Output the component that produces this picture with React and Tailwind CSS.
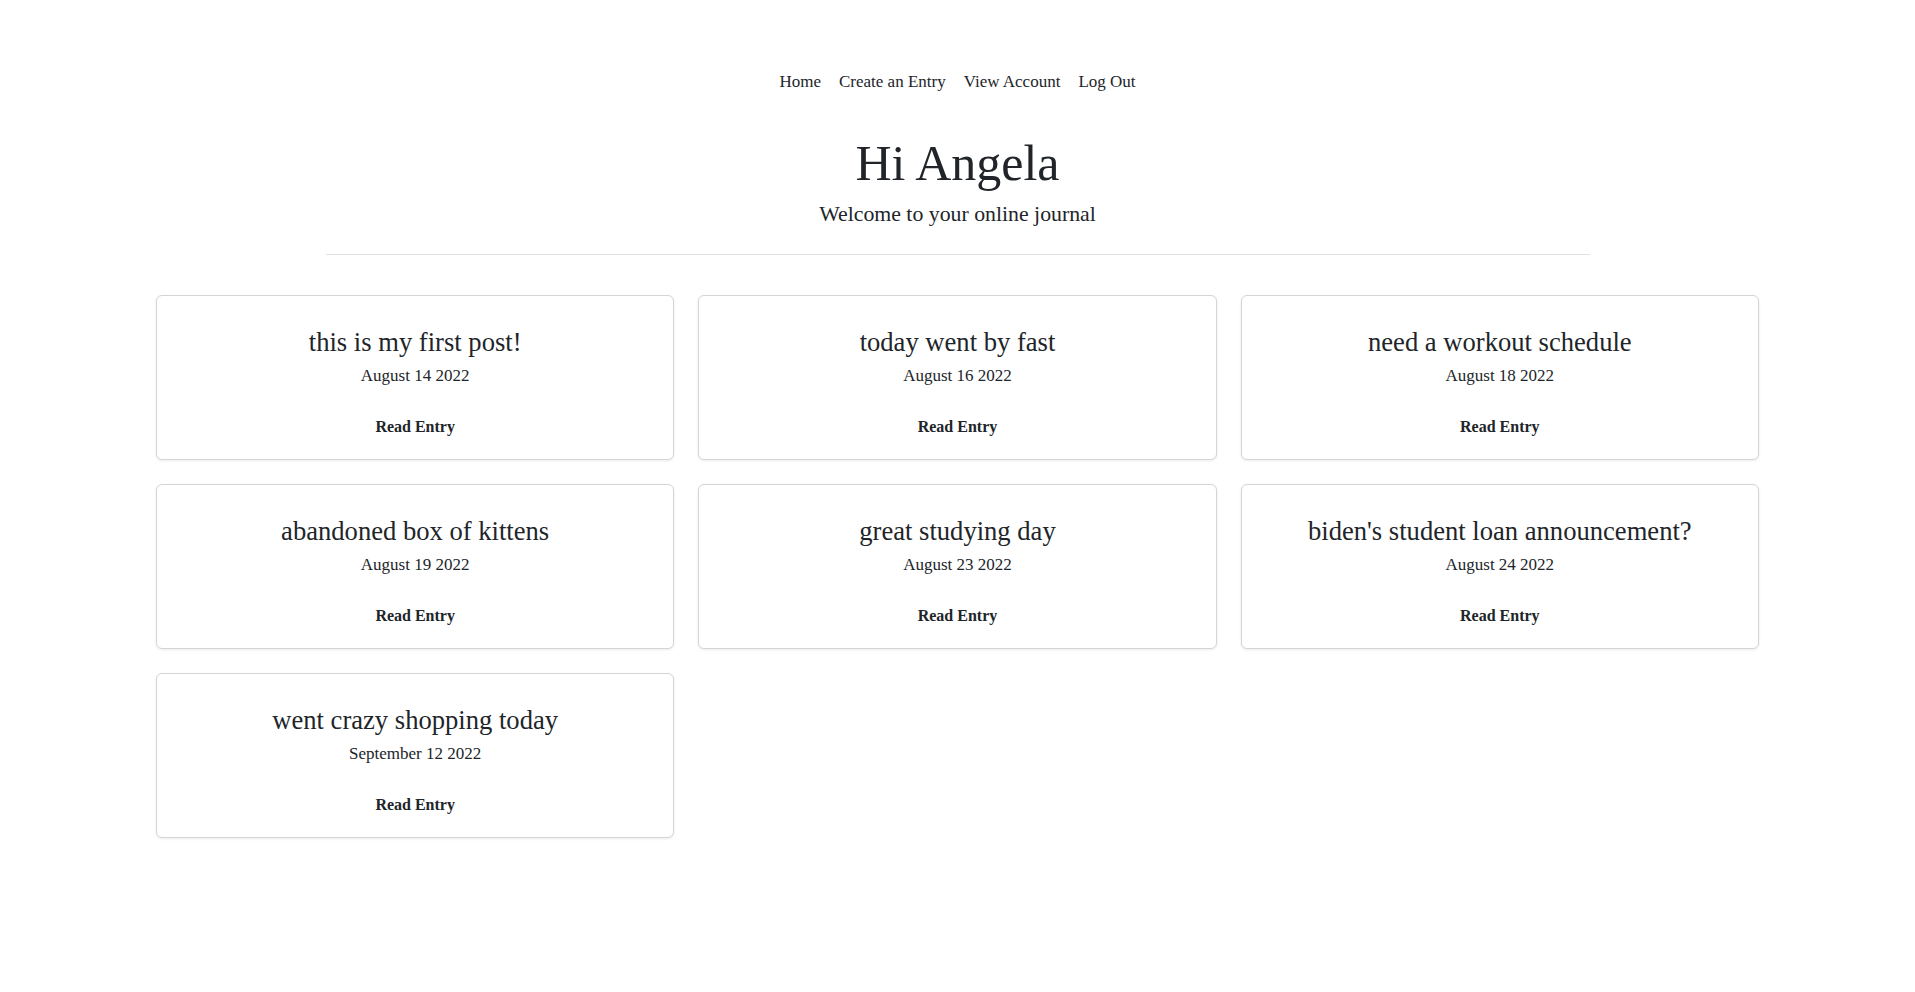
import React from "react";

const entries = [
  { id: 1, title: "this is my first post!", date: "August 14 2022" },
  { id: 2, title: "today went by fast", date: "August 16 2022" },
  { id: 3, title: "need a workout schedule", date: "August 18 2022" },
  { id: 4, title: "abandoned box of kittens", date: "August 19 2022" },
  { id: 5, title: "great studying day", date: "August 23 2022" },
  { id: 6, title: "biden's student loan announcement?", date: "August 24 2022" },
  { id: 7, title: "went crazy shopping today", date: "September 12 2022" },
];

const links = ["Home", "Create an Entry", "View Account", "Log Out"];

function EntryCard({ entry }) {
  return (
    <div className="rounded-[6px] border border-[#d5d5d5] bg-white pt-[30px] pb-[20px] text-center shadow-[0_1px_3px_rgba(0,0,0,0.08)]">
      <h3 className="text-[26.6px] leading-[32px] font-normal">{entry.title}</h3>
      <p className="mt-[6px] text-[17px] leading-[24px]">{entry.date}</p>
      <a href="#" className="mt-[27px] block text-[16px] leading-[24px] font-bold">
        Read Entry
      </a>
    </div>
  );
}

export default function App() {
  return (
    <div className="min-h-screen bg-white text-[#212529] font-['Liberation_Serif',serif] pb-[150px]">
      {/* Nav */}
      <nav className="pt-[70px] flex justify-center gap-[18px] text-[17px] leading-[24px]">
        {links.map(l => (
          <a key={l} href="#" className="text-[#212529]">{l}</a>
        ))}
      </nav>

      {/* Header */}
      <header className="mt-[39px] text-center">
        <h1 className="text-[50px] leading-[60px] font-normal">Hi Angela</h1>
        <p className="mt-[6px] text-[21.8px] leading-[30px]">Welcome to your online journal</p>
      </header>

      <hr className="mx-auto mt-[25px] w-[1264px] border-t border-[#dee2e6]" />

      {/* Entries */}
      <div className="mx-auto mt-[40px] grid w-[1603px] grid-cols-3 gap-[24px]">
        {entries.map(e => <EntryCard key={e.id} entry={e} />)}
      </div>
    </div>
  );
}
